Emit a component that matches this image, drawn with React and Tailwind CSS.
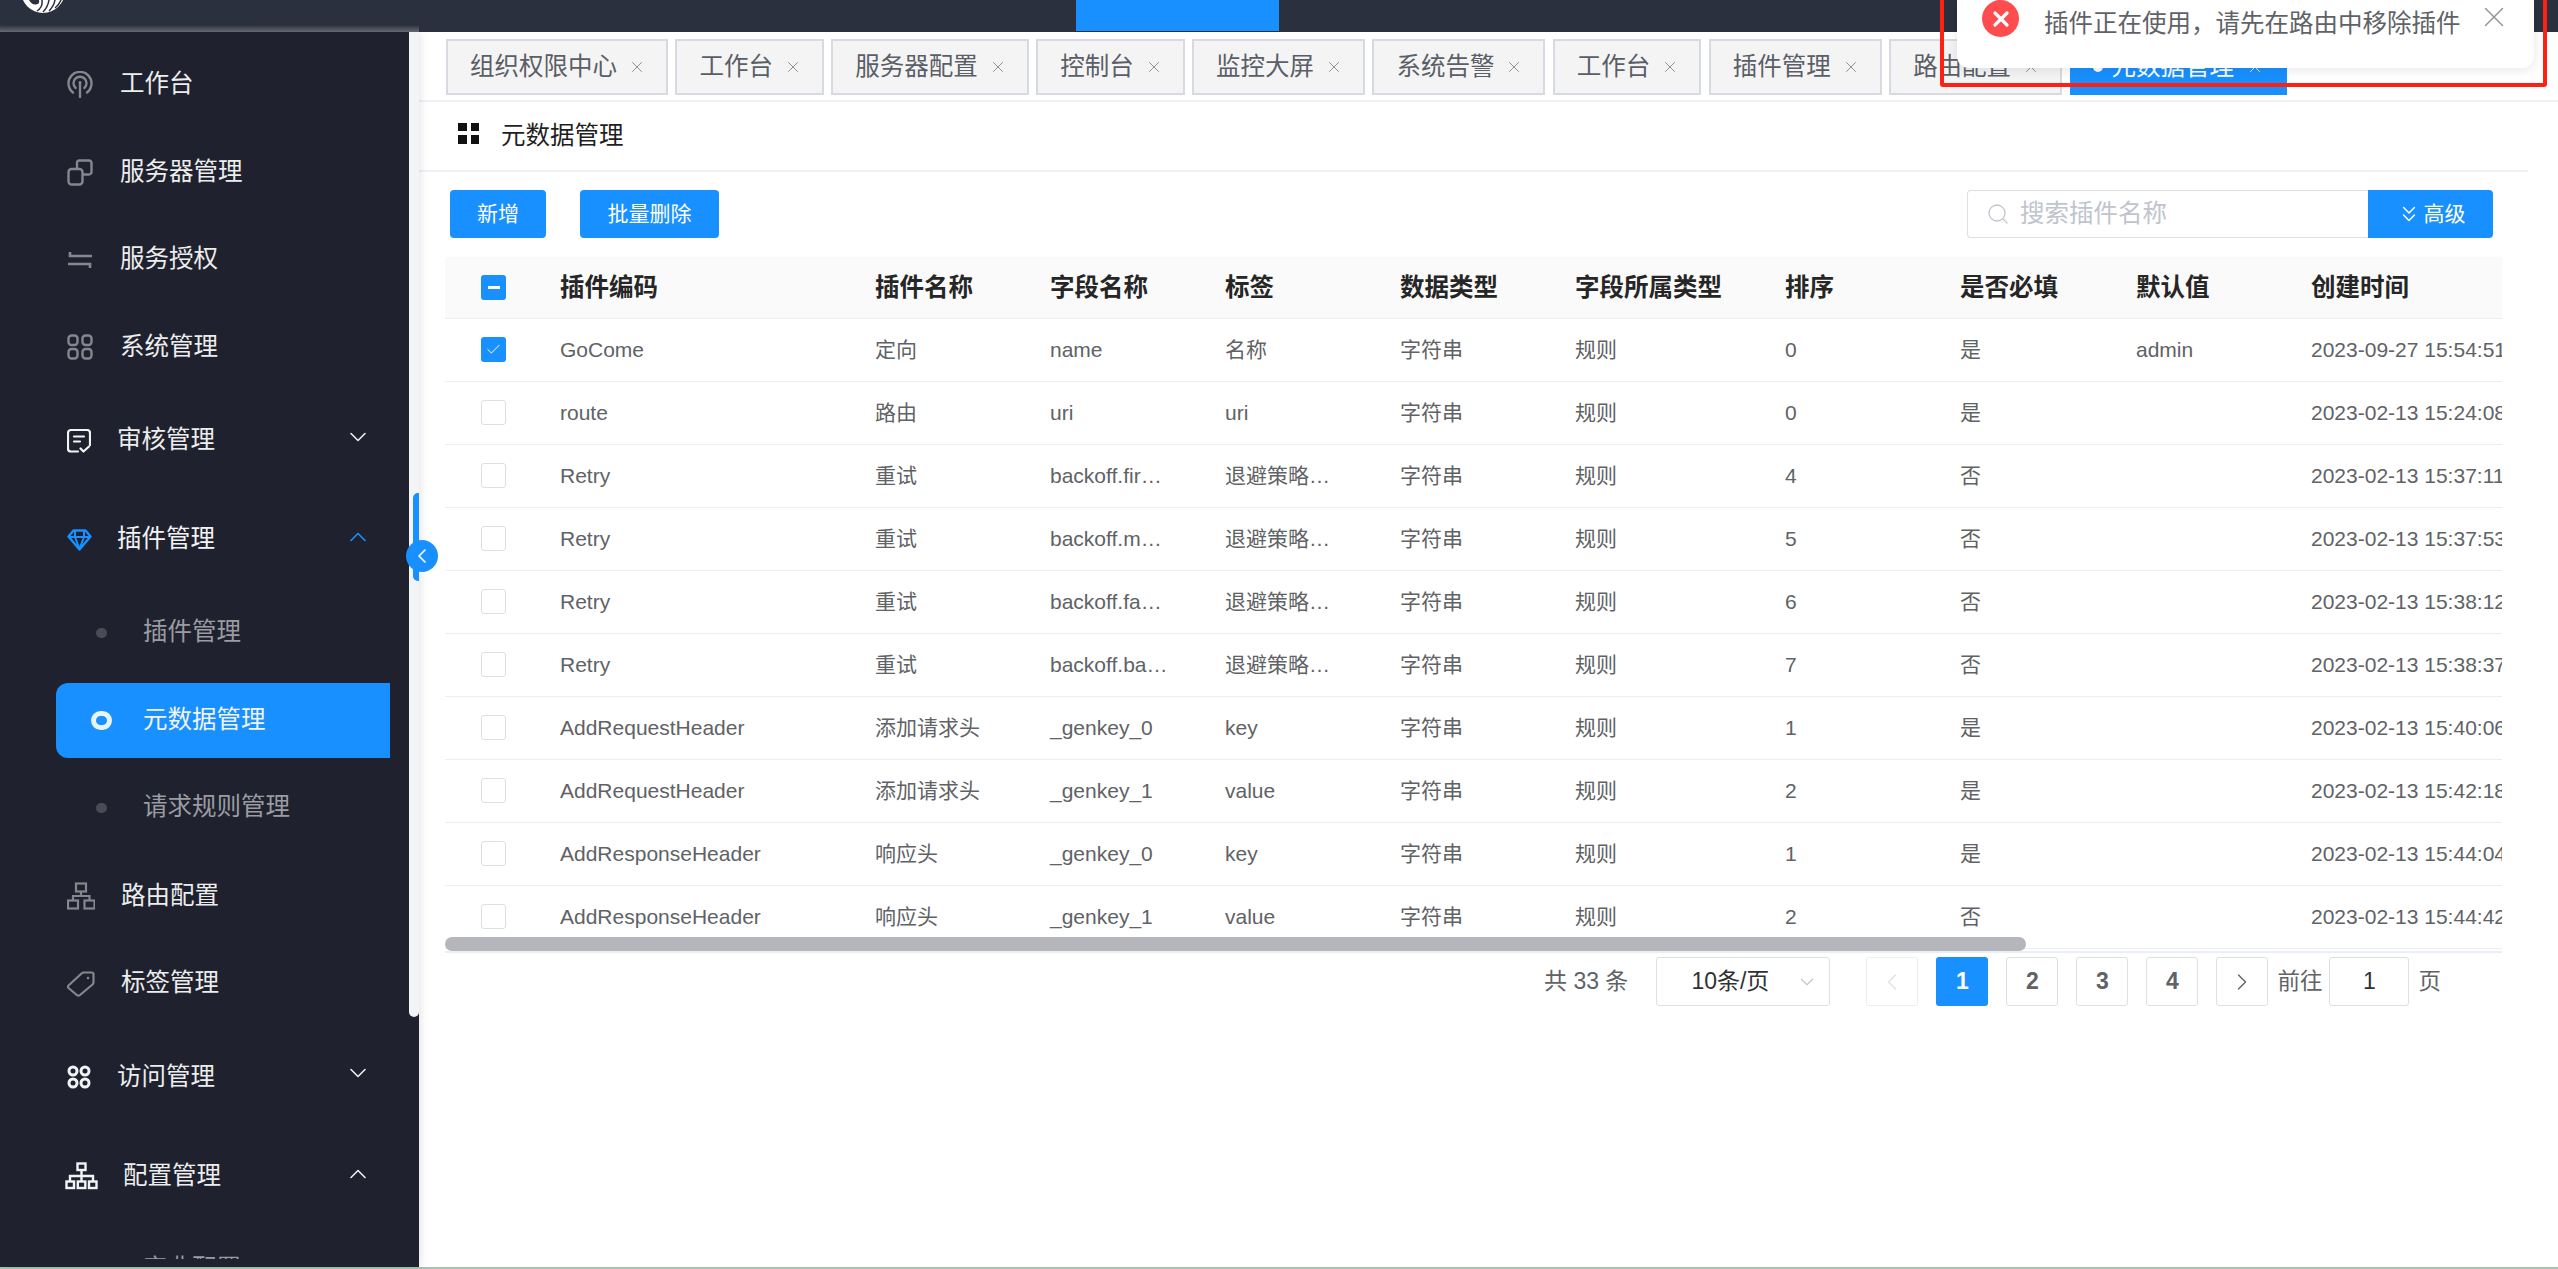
import React from 'react';
import { X, ChevronDown, ChevronUp, ChevronLeft, ChevronRight, ChevronsDown, Search, Check } from 'lucide-react';

const RadioIcon = () => (
  <svg width="26" height="27" viewBox="0 0 26 27" fill="none" stroke="#85878e" strokeWidth="2.4" strokeLinecap="round">
    <path d="M6 21.5A11.5 11.5 0 1 1 20 21.5" />
    <path d="M8.6 17A6.5 6.5 0 1 1 17.4 17" />
    <path d="M13 13v13" />
    <circle cx="13" cy="11.5" r="1.6" fill="#85878e" stroke="none" />
  </svg>
);

const CopyIcon = () => (
  <svg width="26" height="27" viewBox="0 0 26 27" fill="none" stroke="#85878e" strokeWidth="2.4">
    <rect x="1.5" y="10" width="14" height="15.5" rx="3" />
    <path d="M10 9.5V4a2.5 2.5 0 0 1 2.5-2.5h9A2.5 2.5 0 0 1 24.5 4v9a2.5 2.5 0 0 1-2.5 2.5h-6" />
  </svg>
);

const SwapIcon = () => (
  <svg width="26" height="18" viewBox="0 0 26 18" fill="none" stroke="#85878e" strokeWidth="2.6">
    <path d="M25 5H3V1" />
    <path d="M1 13h22v4" />
  </svg>
);

const GridIcon = () => (
  <svg width="26" height="26" viewBox="0 0 26 26" fill="none" stroke="#85878e" strokeWidth="2.4">
    <rect x="1.5" y="1.5" width="9" height="9.5" rx="3" />
    <rect x="15.5" y="1.5" width="9" height="9.5" rx="3" />
    <rect x="1.5" y="15" width="9" height="9.5" rx="3" />
    <rect x="15.5" y="15" width="9" height="9.5" rx="3" />
  </svg>
);

const AuditIcon = () => (
  <svg width="24" height="24" viewBox="0 0 24 24" fill="none" stroke="#f2f3f5" strokeWidth="2.2" strokeLinecap="round" strokeLinejoin="round">
    <path d="M11 22.5H4a3 3 0 0 1-3-3V4a3 3 0 0 1 3-3h16a3 3 0 0 1 3 3v12" />
    <path d="M7 7.5h10M7 12.5h6" />
    <path d="M13.5 19.5l3 3 5.5-5" />
  </svg>
);

const GemIcon = () => (
  <svg width="25" height="22" viewBox="0 0 25 22" fill="none" stroke="#1890ff" strokeWidth="2.4" strokeLinejoin="round">
    <path d="M6.5 1.5h12l5 6-11 13-11-13z" />
    <path d="M2 8h21M8 8l4.500 12L17 8M8 2l0 6M17 2l0 6" strokeWidth="2" />
  </svg>
);

const RouteIcon = () => (
  <svg width="28" height="28" viewBox="0 0 28 28" fill="none" stroke="#85878e" strokeWidth="2.2">
    <rect x="9" y="1.500" width="10" height="8" />
    <rect x="1" y="18.500" width="10" height="8" />
    <rect x="17.500" y="18.500" width="10" height="8" />
    <path d="M14 9.500V14M6 18.500V14h16.500v4.500" />
  </svg>
);

const TagIcon = () => (
  <svg width="28" height="27" viewBox="0 0 28 27" fill="none" stroke="#85878e" strokeWidth="2.200" strokeLinejoin="round">
    <path d="M1.500 15.500L14.500 3.500c.8-.7 1.500-1 2.500-1h8a1.500 1.500 0 0 1 1.500 1.500v8c0 1-.4 1.800-1 2.500L13 25c-1 .9-2.200.9-3.200 0L1.500 18c-.8-.7-.8-1.800 0-2.500z" />
    <circle cx="21" cy="8" r="1.300" fill="#85878e" stroke="none" />
  </svg>
);

const AccessIcon = () => (
  <svg width="24" height="24" viewBox="0 0 24 24" fill="none" stroke="#f2f3f5" strokeWidth="3">
    <circle cx="6" cy="6" r="4" />
    <circle cx="18" cy="6" r="4" />
    <circle cx="6" cy="18" r="4" />
    <circle cx="18" cy="18" r="4" />
  </svg>
);

const OrgIcon = () => (
  <svg width="33" height="28" viewBox="0 0 33 28" fill="none" stroke="#f2f3f5" strokeWidth="2.400">
    <rect x="12.500" y="1.500" width="8" height="6.500" />
    <rect x="1.500" y="19.500" width="7.500" height="6.500" />
    <rect x="12.800" y="19.500" width="7.500" height="6.500" />
    <rect x="24" y="19.500" width="7.500" height="6.500" />
    <path d="M16.500 8v11.500M5 19.500V14h23v5.500" />
  </svg>
);

const Logo = () => (
  <svg width="46" height="13" viewBox="0 0 46 13">
    <circle cx="23" cy="-9" r="22" fill="#fff" />
    <path d="M9 0Q12 5 16 4.500T19 0z" fill="#2a303d" />
    <g fill="none" stroke="#2a303d" strokeWidth="1.500">
      <path d="M22 0Q23 7 17 11" />
      <path d="M29 0Q28 7 23 12" />
      <path d="M35 0Q34 6 29 11" />
      <path d="M41 0Q39 5 35 8" />
    </g>
  </svg>
);

function MenuItem({ icon, label, height = 'h-[87.5px]', gap, chevron, active }) {
  return (
    <div className={`flex items-center pl-[67px] pr-[47px] shrink-0 ${height}`}>
      <span className={`flex justify-center shrink-0 ${gap}`}>{icon}</span>
      <span className={`text-[24.5px] ${active ? 'text-[#f2f3f5]' : 'text-[#eceded]'}`}>{label}</span>
      {chevron === 'down' && <ChevronDown size={28} strokeWidth={1.4} className="ml-auto mb-[8px] text-[#eceded]" />}
      {chevron === 'up' && <ChevronUp size={28} strokeWidth={1.4} className={`ml-auto mb-[5px] ${active ? 'text-[#1890ff]' : 'text-[#eceded]'}`} />}
    </div>
  );
}

function SubItem({ label, active }) {
  return (
    <div className="h-[87.5px] flex items-center shrink-0 pl-[56px] pr-[29px]">
      <div className={`flex items-center h-[75px] w-full rounded-l-[12px] ${active ? 'bg-[#1890ff]' : ''}`}>
        <span className="w-[87px] flex justify-center pl-[8px] shrink-0 pr-[4px]">
          {active
            ? <span className="w-[21px] h-[19px] rounded-full border-[5.5px] border-[#e8f2fb]" />
            : <span className="w-[11px] h-[10px] rounded-full bg-[#4a4c55]" />}
        </span>
        <span className={`text-[24.5px] ${active ? 'text-[#f2f3f5]' : 'text-[#9a9ca2]'}`}>{label}</span>
      </div>
    </div>
  );
}

function Sidebar() {
  return (
    <aside className="relative z-10 w-[419px] shrink-0 bg-[#1f222e] overflow-hidden flex flex-col pt-[9px] shadow-[2px_0_8px_rgba(0,0,0,0.1)]">
      <MenuItem icon={<RadioIcon />} label="工作台" gap="mr-[27px]" />
      <MenuItem icon={<CopyIcon />} label="服务器管理" gap="mr-[27px]" />
      <MenuItem icon={<SwapIcon />} label="服务授权" gap="mr-[27px]" />
      <MenuItem icon={<GridIcon />} label="系统管理" gap="mr-[27px]" />
      <MenuItem icon={<AuditIcon />} label="审核管理" height="h-[99px]" gap="mr-[26px]" chevron="down" />
      <MenuItem icon={<GemIcon />} label="插件管理" height="h-[99px]" gap="mr-[25px]" chevron="up" active />
      <SubItem label="插件管理" />
      <SubItem label="元数据管理" active />
      <SubItem label="请求规则管理" />
      <div className="h-[1px] shrink-0" />
      <MenuItem icon={<RouteIcon />} label="路由配置" gap="mr-[26px]" />
      <MenuItem icon={<TagIcon />} label="标签管理" gap="mr-[26px]" />
      <MenuItem icon={<AccessIcon />} label="访问管理" height="h-[99px]" gap="mr-[26px]" chevron="down" />
      <div className="-ml-[2px]">
        <MenuItem icon={<OrgIcon />} label="配置管理" height="h-[99px]" gap="mr-[25px]" chevron="up" />
      </div>
      <SubItem label="字典配置" />
      {/* the menu is clipped a little above the bottom edge */}
      <div className="absolute bottom-0 left-0 right-0 h-[8px] bg-[#1f222e]" />
      {/* scrollbar thumb laid over the menu */}
      <div className="absolute top-0 right-0 w-[10px] h-[985px] bg-[#f3f4f7] rounded-b-[5px]" />
      <div className="absolute top-[461px] right-0 w-[6px] h-[88px] bg-[#1890ff] rounded-l-[5px]" />
    </aside>
  );
}

const tabs = ['组织权限中心', '工作台', '服务器配置', '控制台', '监控大屏', '系统告警', '工作台', '插件管理', '路由配置'];

function TabBar() {
  return (
    <div className="h-[70px] shrink-0 flex items-start gap-[7.4px] pt-[7px] pl-[27px] border-b-2 border-[#f0f1f4] overflow-hidden">
      {tabs.map((t, i) => (
        <div key={i} className="h-[56px] shrink-0 flex items-center border-2 border-[#d8dae2] bg-[#f4f4f5] pl-[22px] pr-[20px] text-[24.5px] text-[#5a5e66]">
          {t}
          <X size={18} strokeWidth={1.2} className="ml-[11px] text-[#83868c]" />
        </div>
      ))}
      <div className="h-[56px] shrink-0 flex items-center bg-[#1890ff] pl-[23px] pr-[23px] text-[24.5px] text-white">
        <span className="w-[10px] h-[10px] rounded-full bg-white mr-[9px]" />
        元数据管理
        <X size={18} strokeWidth={1.2} className="ml-[12px]" />
      </div>
    </div>
  );
}

const cols = [
  { title: '插件编码', key: 'code', w: 'w-[315px]' },
  { title: '插件名称', key: 'name', w: 'w-[175px]' },
  { title: '字段名称', key: 'field', w: 'w-[175px]' },
  { title: '标签', key: 'label', w: 'w-[175px]' },
  { title: '数据类型', key: 'type', w: 'w-[175px]' },
  { title: '字段所属类型', key: 'owner', w: 'w-[210px]' },
  { title: '排序', key: 'sort', w: 'w-[175px]' },
  { title: '是否必填', key: 'req', w: 'w-[176px]' },
  { title: '默认值', key: 'def', w: 'w-[175px]' },
  { title: '创建时间', key: 'time', w: 'w-[825px]' },
];

const base = { type: '字符串', owner: '规则', def: '' };
const rows = [
  { ...base, code: 'GoCome', name: '定向', field: 'name', label: '名称', sort: 0, req: '是', def: 'admin', time: '2023-09-27 15:54:51' },
  { ...base, code: 'route', name: '路由', field: 'uri', label: 'uri', sort: 0, req: '是', time: '2023-02-13 15:24:08' },
  { ...base, code: 'Retry', name: '重试', field: 'backoff.fir…', label: '退避策略…', sort: 4, req: '否', time: '2023-02-13 15:37:11' },
  { ...base, code: 'Retry', name: '重试', field: 'backoff.m…', label: '退避策略…', sort: 5, req: '否', time: '2023-02-13 15:37:53' },
  { ...base, code: 'Retry', name: '重试', field: 'backoff.fa…', label: '退避策略…', sort: 6, req: '否', time: '2023-02-13 15:38:12' },
  { ...base, code: 'Retry', name: '重试', field: 'backoff.ba…', label: '退避策略…', sort: 7, req: '否', time: '2023-02-13 15:38:37' },
  { ...base, code: 'AddRequestHeader', name: '添加请求头', field: '_genkey_0', label: 'key', sort: 1, req: '是', time: '2023-02-13 15:40:06' },
  { ...base, code: 'AddRequestHeader', name: '添加请求头', field: '_genkey_1', label: 'value', sort: 2, req: '是', time: '2023-02-13 15:42:18' },
  { ...base, code: 'AddResponseHeader', name: '响应头', field: '_genkey_0', label: 'key', sort: 1, req: '是', time: '2023-02-13 15:44:04' },
  { ...base, code: 'AddResponseHeader', name: '响应头', field: '_genkey_1', label: 'value', sort: 2, req: '否', time: '2023-02-13 15:44:42' },
];

function DataTable() {
  return (
    <div className="relative ml-[26px] mr-[56px] h-[696px] overflow-hidden border-b-2 border-[#ebeef5]">
      <table className="table-fixed w-[2676px] border-collapse">
        <thead>
          <tr className="h-[61px] bg-[#fafafa] border-b border-[#ebeef5]">
            <th className="w-[100px] pl-[36px] text-left">
              <span className="w-[25px] h-[25px] rounded-[3px] bg-[#1890ff] flex items-center justify-center">
                <span className="w-[12px] h-[3px] bg-white" />
              </span>
            </th>
            {cols.map((c) => (
              <th key={c.key} className={`${c.w} px-[15px] pt-[2px] text-left text-[24.5px] font-bold text-[#262626]`}>{c.title}</th>
            ))}
          </tr>
        </thead>
        <tbody>
          {rows.map((r, i) => (
            <tr key={i} className="h-[63px] border-b border-[#ebeef5]">
              <td className="pl-[36px]">
                {i === 0 ? (
                  <span className="w-[25px] h-[25px] rounded-[3px] bg-[#1890ff] flex items-center justify-center">
                    <Check size={17} strokeWidth={1.4} className="text-white" />
                  </span>
                ) : (
                  <span className="block w-[25px] h-[25px] rounded-[3px] border border-[#dcdfe6] bg-white" />
                )}
              </td>
              {cols.map((c) => (
                <td key={c.key} className="px-[15px] text-[21px] text-[#606266] whitespace-nowrap overflow-hidden">{r[c.key]}</td>
              ))}
            </tr>
          ))}
        </tbody>
      </table>
      <div className="absolute left-0 top-[680px] w-[1581px] h-[14px] rounded-full bg-[#b5b6bb]" />
    </div>
  );
}

function Pager() {
  const btn = 'w-[52px] h-[49px] rounded-[3px] border border-[#dcdfe6] flex items-center justify-center bg-white shrink-0';
  return (
    <div className="h-[49px] mt-[4px] flex items-center text-[23px] text-[#606266] pl-[1125px]">
      <span className="mr-[28px]">共 33 条</span>
      <div className="w-[174px] h-[49px] border border-[#dcdfe6] rounded-[3px] flex items-center pl-[34px] pr-[11px] text-[#303133] mr-[36px]">
        10条/页
        <ChevronDown size={22} strokeWidth={1.2} className="ml-auto text-[#c0c4cc]" />
      </div>
      <div className={`${btn} border-[#ebeef5] mr-[18px]`}><ChevronLeft size={28} strokeWidth={1.2} className="text-[#dfe2e8]" /></div>
      <div className="w-[52px] h-[49px] rounded-[3px] bg-[#1890ff] flex items-center justify-center text-white font-bold mr-[18px]">1</div>
      <div className={`${btn} font-bold mr-[18px]`}>2</div>
      <div className={`${btn} font-bold mr-[18px]`}>3</div>
      <div className={`${btn} font-bold mr-[18px]`}>4</div>
      <div className={`${btn} mr-[9px]`}><ChevronRight size={28} strokeWidth={1.2} className="text-[#606266]" /></div>
      <span className="mr-[7px] text-[22.5px]">前往</span>
      <div className="w-[80px] h-[49px] border border-[#dcdfe6] rounded-[3px] flex items-center justify-center text-[#303133] mr-[9px]">1</div>
      <span className="text-[22.5px]">页</span>
    </div>
  );
}

function Main() {
  return (
    <main className="flex-1 min-w-0 bg-white flex flex-col overflow-hidden">
      <TabBar />
      <div className="h-[70px] shrink-0 flex items-center mr-[30px] border-b-2 border-[#f0f1f4] pl-[39px]">
        <span className="grid grid-cols-2 gap-[4px] mr-[22px] -mt-[6px]">
          <i className="w-[8.500px] h-[8.500px] bg-[#111]" />
          <i className="w-[8.500px] h-[8.500px] bg-[#111]" />
          <i className="w-[8.500px] h-[8.500px] bg-[#111]" />
          <i className="w-[8.500px] h-[8.500px] bg-[#111]" />
        </span>
        <span className="text-[24.5px] text-[#1f1f1f]">元数据管理</span>
      </div>
      <div className="h-[85px] shrink-0 flex items-start pt-[18px] pl-[31px] pr-[65px]">
        <button className="w-[96px] h-[48px] rounded-[4px] bg-[#1890ff] text-white text-[21px]">新增</button>
        <button className="w-[139px] h-[48px] rounded-[4px] bg-[#1890ff] text-white text-[21px] ml-[34px]">批量删除</button>
        <div className="ml-auto flex h-[48px]">
          <div className="w-[401px] border border-[#dcdfe6] border-r-0 rounded-l-[4px] flex items-center pl-[18px] text-[24.5px] text-[#c0c4cc]">
            <Search size={24} strokeWidth={1.3} className="mr-[10px]" />
            搜索插件名称
          </div>
          <button className="w-[125px] rounded-r-[4px] bg-[#1890ff] text-white text-[21px] flex items-center justify-center gap-[2px]">
            <ChevronsDown size={26} strokeWidth={1.4} />
            高级
          </button>
        </div>
      </div>
      <DataTable />
      <Pager />
    </main>
  );
}

const navItems = [
  { label: '首页总览', cls: 'left-[523px]' },
  { label: '组织中心', cls: 'left-[742px]' },
  { label: '监控中心', cls: 'left-[940px]' },
  { label: '网关管理', cls: 'left-[1145px]' },
  { label: '流量中心', cls: 'left-[1345px]' },
  { label: '日志中心', cls: 'left-[1570px]' },
];

export default function App() {
  return (
    <div className="relative w-screen h-screen overflow-hidden flex flex-col bg-white font-['Liberation_Sans','Noto_Sans_CJK_SC',sans-serif]">
      <header className="relative h-[32px] shrink-0 bg-[#2a303d] overflow-hidden">
        <div className="absolute left-[20px] top-0"><Logo /></div>
        <div className="absolute left-[1076px] top-0 w-[203px] h-[31px] bg-[#1890ff]" />
        {navItems.map((n) => (
          <span key={n.label} className={`absolute top-[-23px] text-[24px] leading-[24px] text-[#d8dae0] ${n.cls}`}>{n.label}</span>
        ))}
        <div className="absolute left-0 bottom-0 w-[419px] h-[7px] bg-gradient-to-b from-transparent to-[#6b6e76]" />
      </header>
      <div className="relative flex-1 min-h-0 flex">
        <Sidebar />
        <Main />
        {/* collapse handle */}
        <div className="absolute z-20 left-[406px] top-[508px] w-[32px] h-[32px] rounded-full bg-[#1890ff] flex items-center justify-center">
          <ChevronLeft size={24} strokeWidth={1.6} className="text-white" />
        </div>
      </div>
      <div className="h-[2px] shrink-0 bg-[#a8c4b0]" />

      {/* error notification and the red annotation box over it */}
      <div className="absolute z-30 top-0 right-[24px] w-[577px] h-[68px] bg-white rounded-b-[12px] shadow-[0_2px_12px_rgba(0,0,0,0.1)] flex items-start pl-[25px]">
        <span className="w-[37px] h-[37px] rounded-full bg-[#ff4d4f] flex items-center justify-center shrink-0">
          <X size={24} strokeWidth={3.2} className="text-white" />
        </span>
        <span className="ml-[25px] text-[24.5px] leading-[48px] text-[#606266] whitespace-nowrap">插件正在使用，请先在路由中移除插件</span>
        <X size={34} strokeWidth={1} className="absolute right-[23px] top-0 text-[#909399]" />
      </div>
      <div className="absolute z-40 top-[-6px] right-[11px] w-[607px] h-[93px] border-[4px] border-[#ff2014] rounded-[3px]" />
    </div>
  );
}
